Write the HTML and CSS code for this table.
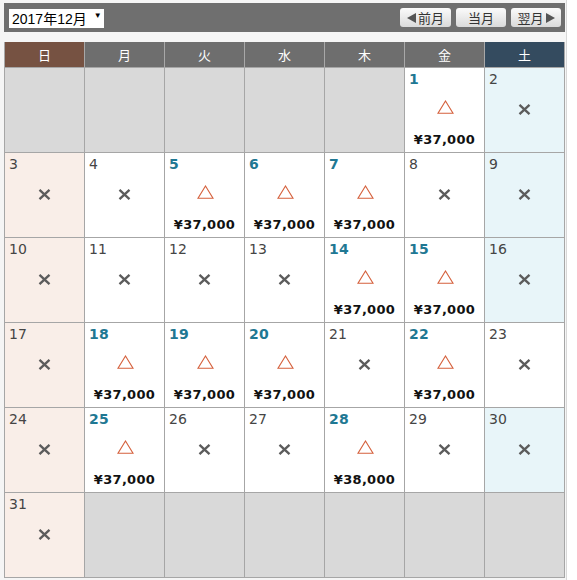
FILE: index.html
```html
<!DOCTYPE html>
<html lang="ja">
<head>
<meta charset="utf-8">
<title>Calendar</title>
<link rel="stylesheet" href="styles.css">
</head>
<body>
<div class="wrap">
  <div class="toolbar">
    <div class="month-select"><span>2017年12月</span><span class="caret">&#9660;</span></div>
    <div class="nav">
      <button class="btn"><svg class="arr" width="9" height="10" viewBox="0 0 9 10"><polygon points="9,0 9,10 0,5" fill="#555"/></svg>前月</button>
      <button class="btn">当月</button>
      <button class="btn">翌月<svg class="arr" width="9" height="10" viewBox="0 0 9 10"><polygon points="0,0 0,10 9,5" fill="#555"/></svg></button>
    </div>
  </div>
  <table class="cal">
    <thead>
      <tr>
        <th class="sun">日</th><th>月</th><th>火</th><th>水</th><th>木</th><th>金</th><th class="sat">土</th>
      </tr>
    </thead>
    <tbody id="cal-body"></tbody>
  </table>
</div>
<script src="app.js"></script>
</body>
</html>
```
FILE: app.js
```js
(function () {
  var data = {
    1: 37000, 5: 37000, 6: 37000, 7: 37000, 14: 37000, 15: 37000,
    18: 37000, 19: 37000, 20: 37000, 22: 37000, 25: 37000, 28: 38000
  };
  var holidays = { 23: true };
  var startDow = 5; // Dec 1 2017 is Friday
  var days = 31;
  var body = document.getElementById('cal-body');
  var tri = '<svg class="tri" width="17" height="14" viewBox="0 0 17 14"><polygon points="8.5,1 16,13.3 1,13.3" fill="none" stroke="#d5603c" stroke-width="1.1"/></svg>';
  var cross = '<svg class="x" width="13" height="11" viewBox="0 0 13 11"><path d="M1.5 0.8 L11.5 10.2 M11.5 0.8 L1.5 10.2" stroke="#5c5c5c" stroke-width="2.3" stroke-linecap="butt"/></svg>';
  var cells = [];
  for (var i = 0; i < startDow; i++) cells.push(null);
  for (var d = 1; d <= days; d++) cells.push(d);
  while (cells.length % 7) cells.push(null);
  var html = '';
  for (var r = 0; r < cells.length / 7; r++) {
    html += '<tr>';
    for (var c = 0; c < 7; c++) {
      var day = cells[r * 7 + c];
      if (day === null) { html += '<td class="empty"></td>'; continue; }
      var cls = 'day';
      if (c === 0) cls += ' sun';
      else if (c === 6 && !holidays[day]) cls += ' sat';
      var price = data[day];
      html += '<td class="' + cls + '"><div class="cell">';
      if (price) {
        html += '<div class="num ok">' + day + '</div>';
        html += '<div class="mark">' + tri + '</div>';
        html += '<div class="price">¥' + price.toLocaleString('en-US') + '</div>';
      } else {
        html += '<div class="num">' + day + '</div>';
        html += '<div class="mark">' + cross + '</div>';
      }
      html += '</div></td>';
    }
    html += '</tr>';
  }
  body.innerHTML = html;
})();
```
FILE: styles.css
```css
html, body {
  margin: 0;
  padding: 0;
  background: #ffffff;
}
.wrap {
  width: 561px;
  min-height: 577px;
  padding: 3px 1px 0 4px;
  background: #f5f5f5;
  border-right: 1px solid #d8d8d8;
}
.toolbar {
  height: 29px;
  background: #6f6f6f;
  display: flex;
  align-items: center;
  justify-content: space-between;
  padding: 0 4px 0 5px;
  box-sizing: border-box;
}
.month-select {
  width: 95px;
  height: 19px;
  background: #fff;
  box-sizing: border-box;
  padding: 0 0 0 3px;
  display: flex;
  align-items: center;
  font-family: "Liberation Sans", "Noto Sans CJK JP", sans-serif;
  font-size: 14px;
  color: #000;
  margin-top: 1px;
}
.month-select .caret {
  font-size: 8px;
  margin-left: 7px;
  margin-top: -5px;
}
.nav {
  display: flex;
  gap: 5px;
}
.btn {
  width: 50px;
  height: 19px;
  border: none;
  border-radius: 3px;
  background: linear-gradient(#fbfbfb, #dadada);
  font-family: "Noto Sans CJK JP", sans-serif;
  font-size: 13px;
  color: #333;
  padding: 0;
  display: flex;
  align-items: center;
  justify-content: center;
  gap: 2px;
  line-height: 1;
}
.btn:first-child { width: 51px; }
.arr { display: block; }
.cal {
  margin-top: 10px;
  border-collapse: collapse;
  table-layout: fixed;
  width: 561px;
}
.cal th {
  height: 25px;
  padding: 0;
  background: #6e6e6e;
  color: #fff;
  font-family: "Noto Sans CJK JP", sans-serif;
  font-weight: normal;
  font-size: 13px;
  border-left: 1px solid #a8a8a8;
  border-right: 1px solid #a8a8a8;
  border-bottom: 1px solid #a6a6a6;
}
.cal th.sun { background: #765242; }
.cal th.sat { background: #344b5f; }
.cal td {
  height: 84px;
  padding: 0;
  border: 1px solid #a6a6a6;
  vertical-align: top;
  background: #fff;
}
.cal td.empty { background: #d9d9d9; }
.cal td.sun { background: #f9eee8; }
.cal td.sat { background: #e8f5f9; }
.cell {
  display: flex;
  flex-direction: column;
  height: 84px;
}
.num {
  padding: 3px 0 0 4px;
  height: 17px;
  line-height: 17px;
  font-family: "DejaVu Sans", Verdana, sans-serif;
  font-size: 14px;
  color: #454545;
}
.num.ok {
  color: #1f7893;
  font-weight: bold;
  letter-spacing: 0.3px;
}
.mark {
  height: 42px;
  display: flex;
  align-items: center;
  justify-content: center;
}
.tri { display: block; margin-bottom: 4px; margin-left: 1px; }
.x { display: block; }
.price {
  padding-top: 2px;
  height: 16px;
  line-height: 16px;
  text-align: center;
  font-family: "DejaVu Sans", Verdana, sans-serif;
  font-weight: bold;
  font-size: 13px;
  letter-spacing: 0.3px;
  color: #111;
}
```
